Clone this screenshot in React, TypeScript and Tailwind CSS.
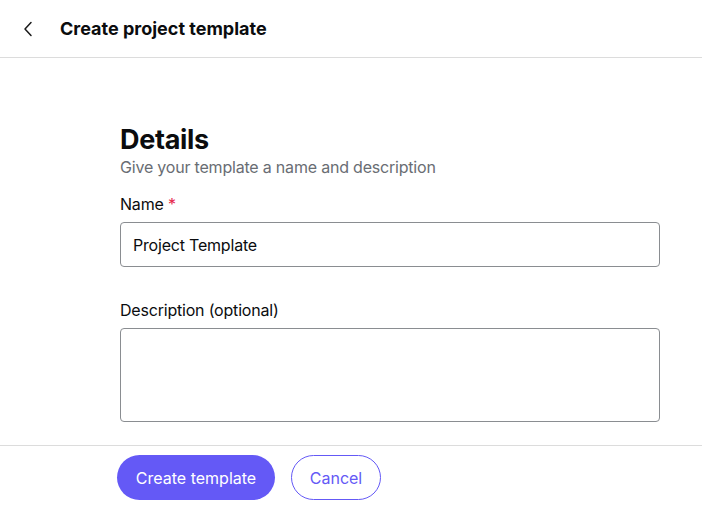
import React, { useState } from "react";

export default function App() {
	const [name, setName] = useState("Project Template");
	const [description, setDescription] = useState("");

	return (
		<div className="flex h-[515px] flex-col bg-white text-[#0b0c0e] font-['Inter',sans-serif]">
			<header className="flex h-[58px] shrink-0 items-center border-b border-[#dcdcdc]">
				<button className="ml-[20px] flex h-[16px] w-[16px] items-center justify-center text-[#1a1a1a]">
					<svg width="10" height="16" viewBox="0 0 10 16" fill="none">
						<path d="M8 1.5L2 8l6 6.5" stroke="currentColor" strokeWidth="1.5" strokeLinecap="round" strokeLinejoin="round" />
					</svg>
				</button>
				<h1 className="ml-[24px] text-[18px] font-bold">Create project template</h1>
			</header>

			<main className="flex-1 overflow-hidden pl-[120px] pt-[66px]">
				<div className="w-[540px]">
					<h2 className="text-[27px] font-bold leading-[32px] tracking-[-0.3px]">Details</h2>
					<p className="text-[16px] leading-[22px] tracking-[-0.2px] text-[#696d73]">Give your template a name and description</p>

					<label className="mt-[15px] block text-[16px] leading-[22px] tracking-[-0.2px]">
						Name <span className="text-[#e5264a]">*</span>
					</label>
					<input
						value={name}
						onChange={(e) => setName(e.target.value)}
						className="mt-[7px] h-[45px] w-full rounded-[4px] border border-[#8a8d91] px-[12px] text-[16px] tracking-[-0.2px] outline-none"
					/>

					<label className="mt-[32px] block text-[16px] leading-[22px] tracking-[-0.2px]">Description (optional)</label>
					<textarea
						value={description}
						onChange={(e) => setDescription(e.target.value)}
						className="mt-[7px] block h-[94px] w-full resize-none rounded-[4px] border border-[#8a8d91] px-[12px] py-[10px] text-[16px] outline-none"
					/>
				</div>
			</main>

			<footer className="flex h-[70px] shrink-0 items-start gap-[16px] border-t border-[#dcdcdc] pl-[117px] pt-[9px]">
				<button className="h-[45px] w-[158px] rounded-full bg-[#6459f6] text-[16px] text-white">Create template</button>
				<button className="h-[45px] w-[90px] rounded-full border border-[#6459f6] text-[16px] text-[#6459f6]">Cancel</button>
			</footer>
		</div>
	);
}
